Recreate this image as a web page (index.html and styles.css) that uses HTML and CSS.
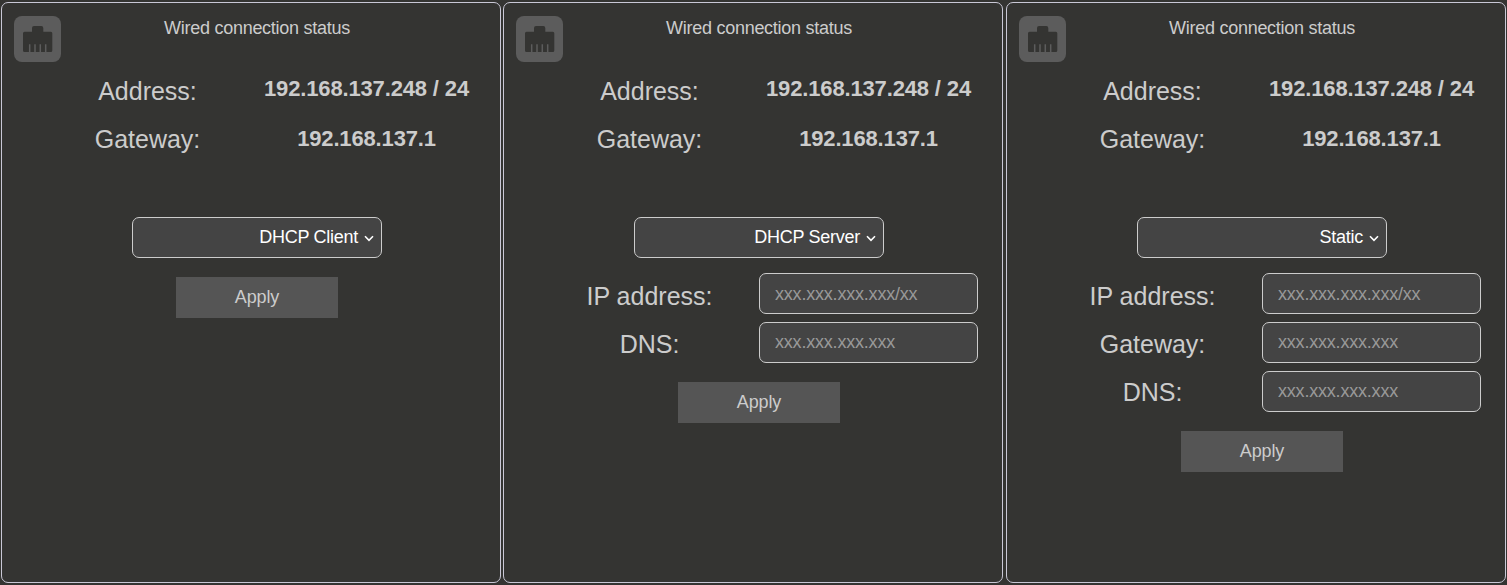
FILE: index.html
```
<!DOCTYPE html>
<html lang="en">
<head>
<meta charset="utf-8">
<title>Wired connection status</title>
<link rel="stylesheet" href="styles.css">
</head>
<body>
<svg class="sprite" aria-hidden="true">
  <symbol id="ethernet" viewBox="0 0 47 46">
    <rect width="47" height="46" rx="8" fill="#5c5c5c"/>
    <path d="M10.500 15.700H18V12q0-2 2-2h7.300q2 0 2 2v3.700h7.500q1.500 0 1.500 1.500V34.500q0 1.500-1.500 1.500H10.500Q9 36 9 34.500V17.200q0-1.500 1.500-1.500z" fill="#343432"/>
    <path d="M15.700 28.300V36M21 28.300V36M26.300 28.300V36M31.700 28.300V36" stroke="#5c5c5c" stroke-width="1.500"/>
  </symbol>
  <symbol id="chevron" viewBox="0 0 10 7">
    <path d="M1 1.200L5 5.300L9 1.200" fill="none" stroke="#fff" stroke-width="1.600"/>
  </symbol>
</svg>
<main class="panels">
  <section class="panel">
    <svg class="icon"><use href="#ethernet"/></svg>
    <h2 class="title">Wired connection status</h2>
    <div class="status">
      <div class="labels"><span>Address:</span><span>Gateway:</span></div>
      <div class="values"><b>192.168.137.248 / 24</b><b>192.168.137.1</b></div>
    </div>
    <button class="mode"><span>DHCP Client</span><svg class="chevron"><use href="#chevron"/></svg></button>
    <button class="apply">Apply</button>
  </section>
  <section class="panel">
    <svg class="icon"><use href="#ethernet"/></svg>
    <h2 class="title">Wired connection status</h2>
    <div class="status">
      <div class="labels"><span>Address:</span><span>Gateway:</span></div>
      <div class="values"><b>192.168.137.248 / 24</b><b>192.168.137.1</b></div>
    </div>
    <button class="mode"><span>DHCP Server</span><svg class="chevron"><use href="#chevron"/></svg></button>
    <div class="form">
      <div class="labels"><span>IP address:</span><span>DNS:</span></div>
      <div class="fields">
        <input class="field first" placeholder="xxx.xxx.xxx.xxx/xx">
        <input class="field" placeholder="xxx.xxx.xxx.xxx">
      </div>
    </div>
    <button class="apply">Apply</button>
  </section>
  <section class="panel">
    <svg class="icon"><use href="#ethernet"/></svg>
    <h2 class="title">Wired connection status</h2>
    <div class="status">
      <div class="labels"><span>Address:</span><span>Gateway:</span></div>
      <div class="values"><b>192.168.137.248 / 24</b><b>192.168.137.1</b></div>
    </div>
    <button class="mode"><span>Static</span><svg class="chevron"><use href="#chevron"/></svg></button>
    <div class="form">
      <div class="labels"><span>IP address:</span><span>Gateway:</span><span>DNS:</span></div>
      <div class="fields">
        <input class="field first" placeholder="xxx.xxx.xxx.xxx/xx">
        <input class="field" placeholder="xxx.xxx.xxx.xxx">
        <input class="field" placeholder="xxx.xxx.xxx.xxx">
      </div>
    </div>
    <button class="apply">Apply</button>
  </section>
</main>
</body>
</html>
```
FILE: styles.css
```
* { box-sizing: border-box; }
body {
  margin: 0;
  background: #343432;
  color: #ccc;
  font-family: "Liberation Sans", Arial, sans-serif;
  font-size: 18px;
  overflow: hidden;
}
.sprite { display: none; }
.panels {
  display: flex;
  gap: 2px;
  margin: 2px 1px 0;
}
.panel {
  position: relative;
  display: flex;
  flex: none;
  flex-direction: column;
  align-items: center;
  width: 500px;
  height: 581px;
  padding: 13px 0 0 12px;
  border: 1px solid #c9c8d6;
  border-radius: 7px;
}
.panel:last-child { margin-left: 1px; }
.icon {
  position: absolute;
  left: 12px;
  top: 13px;
  width: 47px;
  height: 46px;
}
.title {
  margin: 0;
  font-size: 18px;
  font-weight: 400;
  line-height: 24px;
  letter-spacing: -0.27px;
}
.status, .form {
  display: grid;
  grid-template-columns: 219px 219px;
}
.status { height: 153px; margin-top: 24px; }
.labels, .values {
  display: flex;
  flex-direction: column;
  text-align: center;
}
.labels { font-size: 25px; line-height: 48px; }
.status .labels { padding-top: 3px; }
.values { font-size: 22px; line-height: 50px; letter-spacing: -0.15px; }
.mode {
  display: flex;
  align-items: center;
  justify-content: flex-end;
  gap: 6px;
  width: 250px;
  height: 41px;
  padding: 0 7px 1px;
  border: 1px solid #ccc;
  border-radius: 7px;
  background: #444;
  color: #fff;
  font: inherit;
  letter-spacing: -0.27px;
}
.chevron { width: 10px; height: 7px; margin-top: 2px; }
.form { margin-top: 15px; }
.form .labels { height: 0; margin-top: -1px; }
.fields { display: flex; flex-direction: column; gap: 8px; }
.field {
  width: 219px;
  height: 41px;
  padding: 0 15px;
  border: 1px solid #ccc;
  border-radius: 7px;
  background: #444;
  color: #fff;
  font: inherit;
  letter-spacing: -0.2px;
}
.field.first { padding-top: 2px; }
.field::placeholder { color: #999; }
.apply {
  width: 162px;
  height: 41px;
  margin-top: 19px;
  padding: 0 0 1px;
  border: 0;
  background: #555;
  color: #ccc;
  font: inherit;
  letter-spacing: -0.1px;
}
```
